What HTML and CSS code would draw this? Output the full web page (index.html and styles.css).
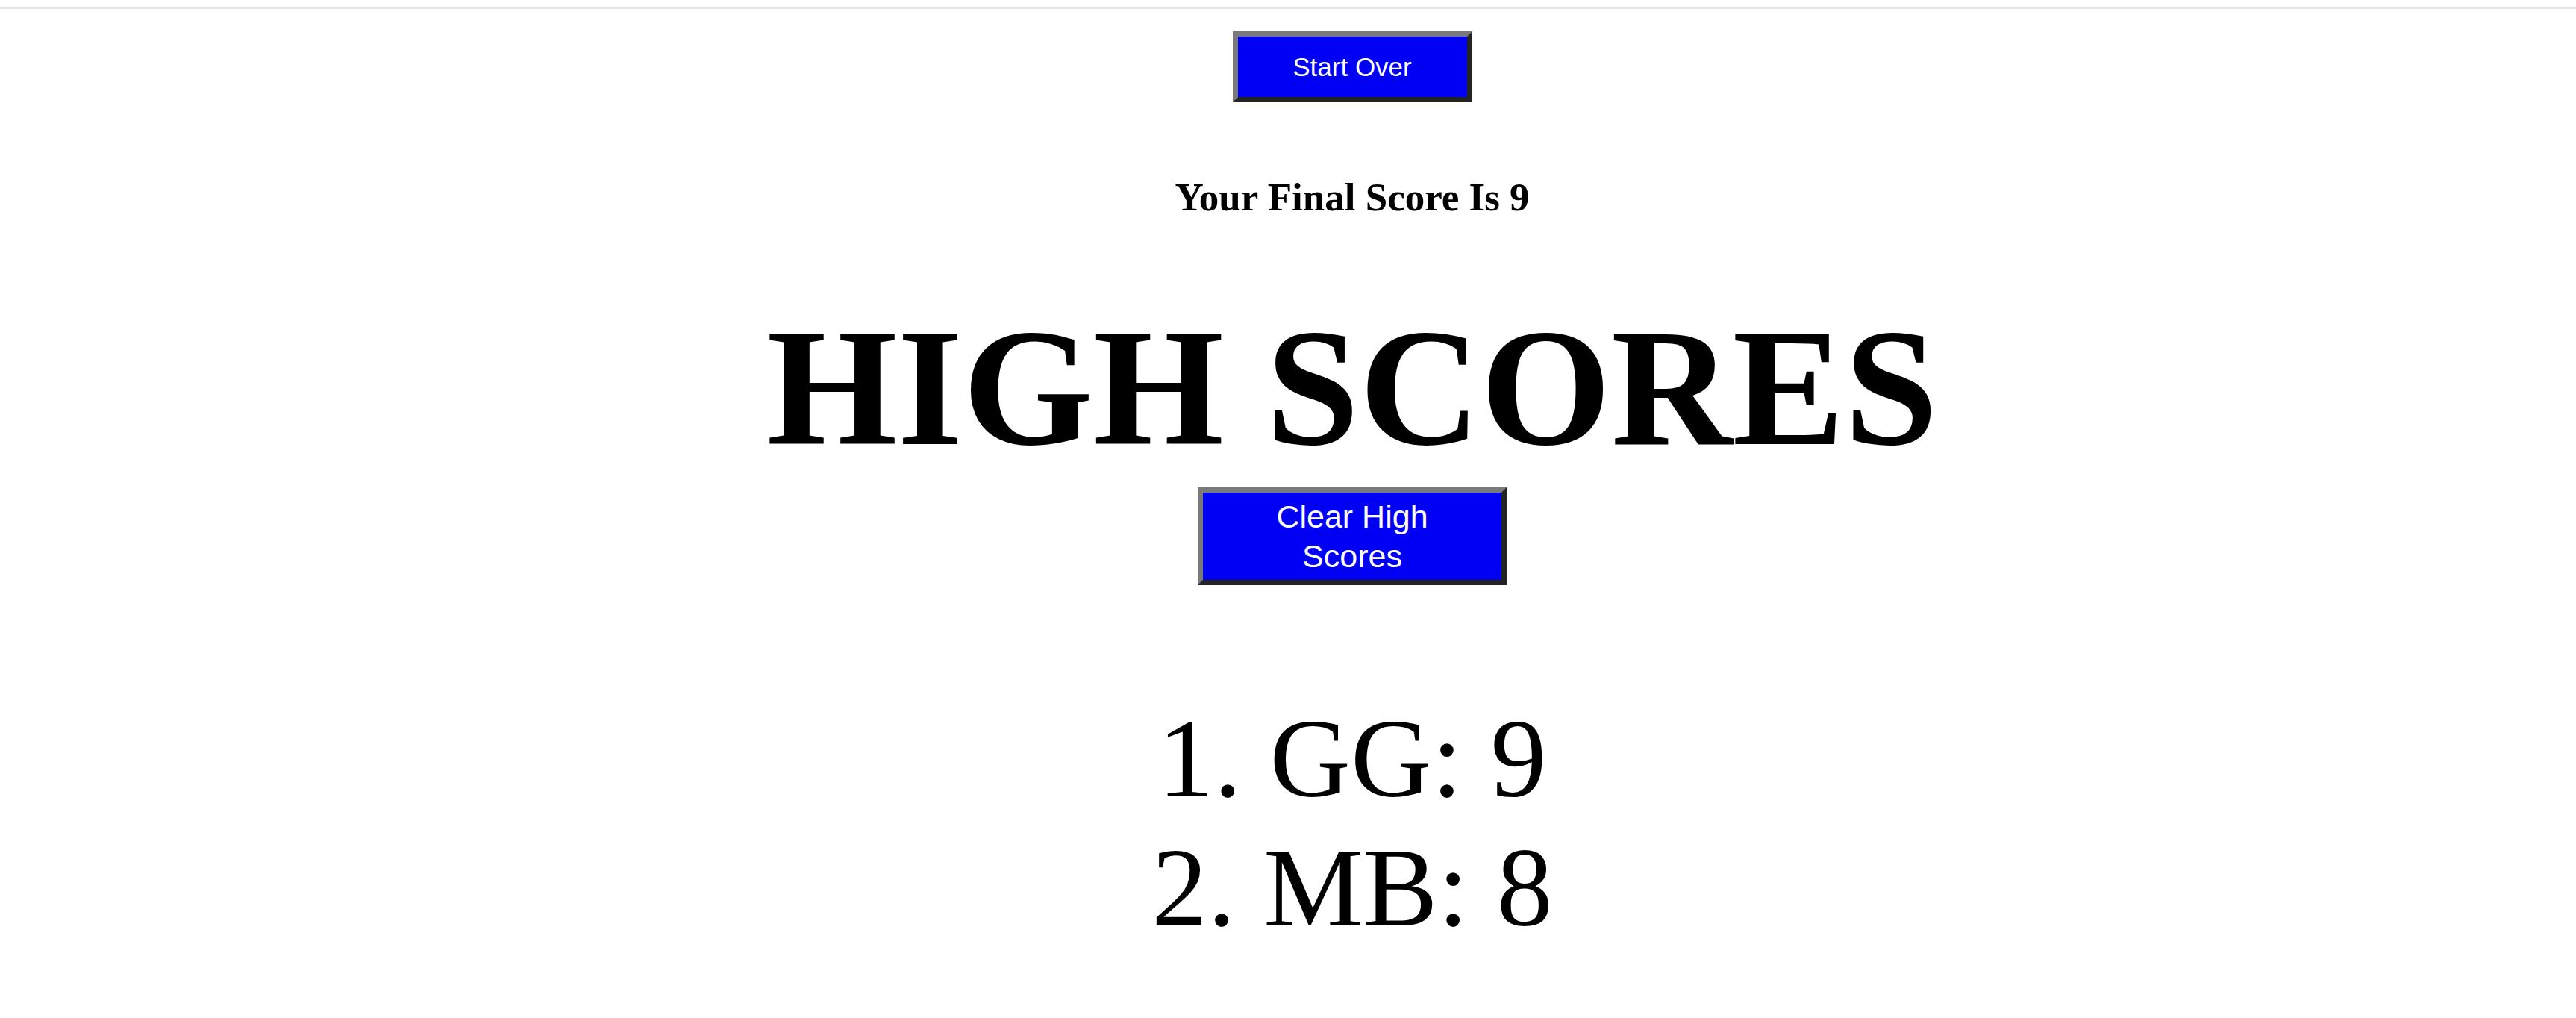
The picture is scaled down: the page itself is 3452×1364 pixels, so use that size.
FILE: index.html
```html
<!DOCTYPE html>
<html lang="en">
<head>
<meta charset="utf-8">
<title>High Scores</title>
<link rel="stylesheet" href="styles.css">
</head>
<body>
<div class="topbar"></div>
<main class="page">
  <button class="btn btn-start" type="button">Start Over</button>
  <h2 class="final">Your Final Score Is 9</h2>
  <h1 class="title">HIGH SCORES</h1>
  <button class="btn btn-clear" type="button">Clear High Scores</button>
  <ol class="scores">
    <li>GG: 9</li>
    <li>MB: 8</li>
  </ol>
</main>
</body>
</html>
```

FILE: styles.css
```css
html, body {
  margin: 0;
  padding: 0;
  background: #ffffff;
}

body {
  font-family: "Liberation Serif", "Times New Roman", serif;
  color: #000000;
}

.topbar {
  height: 10px;
  border-bottom: 2px solid #e4e4e4;
}

.page {
  display: flex;
  flex-direction: column;
  align-items: center;
  padding-left: 172px;
  text-align: center;
}

.btn {
  box-sizing: border-box;
  display: block;
  background: #0000f5;
  color: #ffffff;
  font-family: "Liberation Sans", Arial, Helvetica, sans-serif;
  border-style: solid;
  border-width: 7px;
  border-color: #7a7a7a #232323 #232323 #7a7a7a;
  margin: 0;
  cursor: pointer;
}

.btn-start {
  margin-top: 30px;
  width: 321px;
  height: 95px;
  font-size: 35px;
  line-height: 40px;
  padding: 0;
}

.final {
  margin: 101px 0 0;
  font-size: 53px;
  line-height: 53px;
  font-weight: bold;
}

.title {
  margin: 115px 0 0;
  font-size: 225px;
  line-height: 226px;
  font-weight: bold;
}

.btn-clear {
  margin-top: 21px;
  width: 414px;
  height: 131px;
  font-size: 43px;
  line-height: 53px;
  padding: 1px 40px 0;
}

.scores {
  margin: 146px 0 0;
  padding: 0;
  list-style-position: inside;
  font-size: 150px;
  line-height: 173px;
}
```
